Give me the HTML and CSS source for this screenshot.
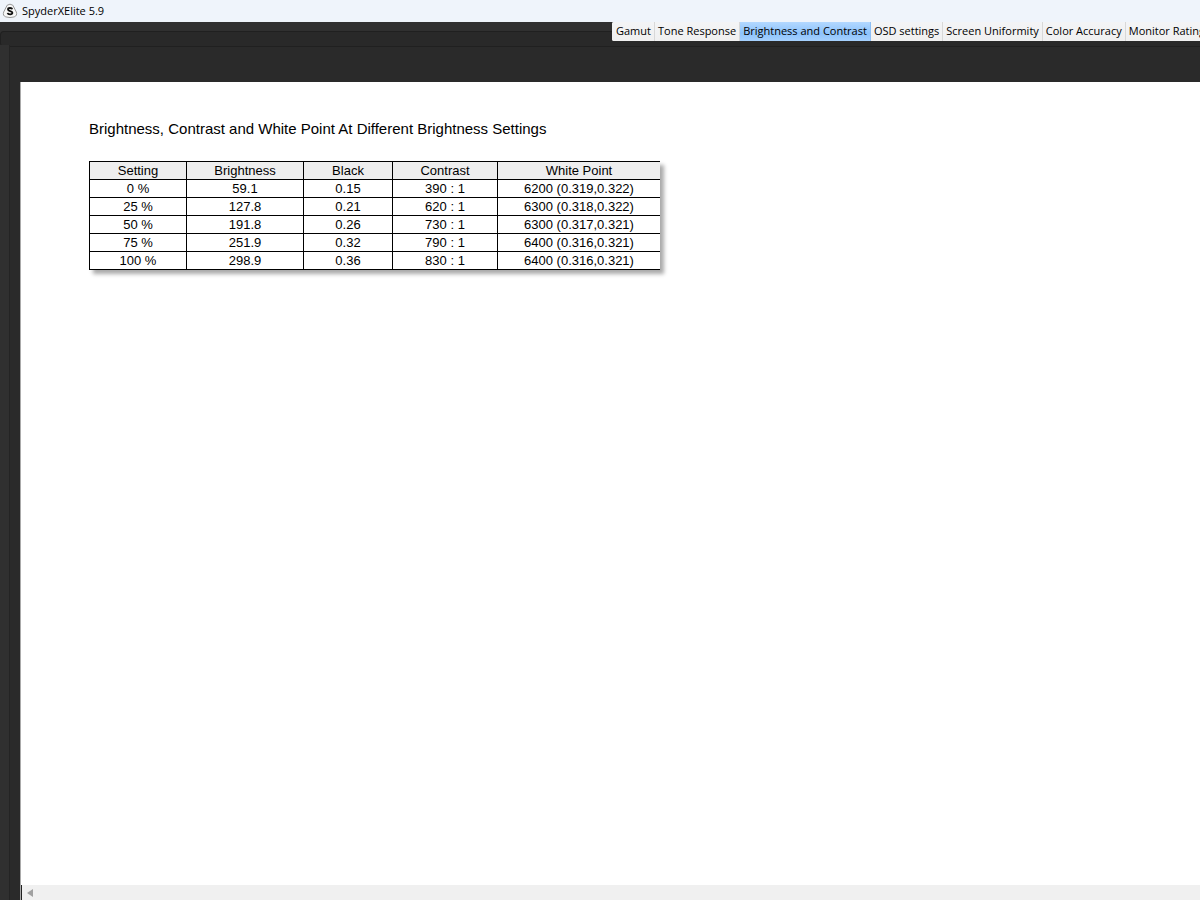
FILE: index.html
```html
<!DOCTYPE html>
<html lang="en">
<head>
  <meta charset="utf-8">
  <meta name="viewport" content="width=device-width, initial-scale=1.0">
  <title>SpyderXElite 5.9</title>
  <link rel="stylesheet" href="styles.css">
</head>
<body>

  <header class="titlebar">
    <svg class="logo" viewBox="0 0 16 16" aria-hidden="true">
      <path d="M5.2 2.2Q8 0.2 10.8 2.2L14.3 9Q15.6 12.6 12.2 13.9Q8 15.2 3.8 13.9Q0.4 12.6 1.7 9Z" fill="#f8f8f8" stroke="#999" stroke-width="1"/>
      <path d="M10.3 6.2C9.8 4.6 6 4.5 6 6.4C6 8.5 10.4 7.6 10.4 9.8C10.4 11.9 6 11.8 5.6 9.9" fill="none" stroke="#111" stroke-width="1.8"/>
    </svg>
    <span>SpyderXElite 5.9</span>
  </header>

  <!-- Report tabs -->
  <nav class="toolbar">
    <div class="tabs">
      <button class="tab">Gamut</button>
      <button class="tab">Tone Response</button>
      <button class="tab active">Brightness and Contrast</button>
      <button class="tab">OSD settings</button>
      <button class="tab">Screen Uniformity</button>
      <button class="tab">Color Accuracy</button>
      <button class="tab">Monitor Rating</button>
    </div>
  </nav>

  <div class="workspace">
    <div class="rail"></div>
    <main class="sheet">
      <div class="report">
        <h1>Brightness, Contrast and White Point At Different Brightness Settings</h1>
        <table class="results">
          <colgroup>
            <col class="col-setting">
            <col class="col-brightness">
            <col class="col-black">
            <col class="col-contrast">
            <col class="col-white">
          </colgroup>
          <thead>
            <tr><th>Setting</th><th>Brightness</th><th>Black</th><th>Contrast</th><th>White Point</th></tr>
          </thead>
          <tbody>
            <tr><td>0 %</td><td>59.1</td><td>0.15</td><td>390 : 1</td><td>6200 (0.319,0.322)</td></tr>
            <tr><td>25 %</td><td>127.8</td><td>0.21</td><td>620 : 1</td><td>6300 (0.318,0.322)</td></tr>
            <tr><td>50 %</td><td>191.8</td><td>0.26</td><td>730 : 1</td><td>6300 (0.317,0.321)</td></tr>
            <tr><td>75 %</td><td>251.9</td><td>0.32</td><td>790 : 1</td><td>6400 (0.316,0.321)</td></tr>
            <tr><td>100 %</td><td>298.9</td><td>0.36</td><td>830 : 1</td><td>6400 (0.316,0.321)</td></tr>
          </tbody>
        </table>
      </div>
      <div class="scrollbar">
        <button class="scroll-left" aria-label="Scroll left">
          <svg viewBox="0 0 6 8" aria-hidden="true"><path d="M6 0V8L0 4Z" fill="#a0a0a0"/></svg>
        </button>
      </div>
    </main>
  </div>

</body>
</html>
```
FILE: styles.css
```css
* {
  box-sizing: border-box;
}

body {
  display: flex;
  flex-direction: column;
  height: 100vh;
  margin: 0;
  overflow: hidden;
  background: #2a2a2a;
  color: #000;
  font-family: "Open Sans", "Noto Sans", sans-serif;
  font-size: 11px;
}

button {
  border: none;
  padding: 0;
  font: inherit;
  color: inherit;
}

.titlebar {
  display: flex;
  align-items: center;
  gap: 4px;
  flex: none;
  height: 22px;
  padding: 0 0 1px 2px;
  background: #eff4fb;
}

.logo {
  width: 16px;
  height: 16px;
}

.toolbar {
  display: grid;
  grid-template-columns: 51% 1fr;
  flex: none;
  height: 23px;
  background: #303030;
}

/* sunken strip behind the tabs */
.toolbar::before {
  content: "";
  grid-row: 1;
  grid-column: 1 / 3;
  height: 14px;
  margin-top: 9px;
  background: #292929;
  border: 1px solid #202020;
  border-right: none;
  border-radius: 4px 0 0 4px;
}

.tabs {
  grid-row: 1;
  grid-column: 2;
  display: flex;
  min-width: 0;
  height: 19px;
  background: #f0f0f0;
  border-radius: 2px 0 0 2px;
}

.tab {
  flex: none;
  padding: 0 3px 2px;
  line-height: 17px;
  white-space: nowrap;
  background: linear-gradient(#f3f4f6, #f0f0f0);
  border-right: 1px solid #d8d8d8;
}

.tab:first-child {
  padding-left: 4px;
  border-radius: 2px 0 0 2px;
}

.tab.active {
  background: linear-gradient(#b3d8ff, #8dc3fc 60%, #a6d0fd);
  border-right-color: #8dbff5;
}

.workspace {
  display: flex;
  flex: 1;
  min-height: 0;
}

.rail {
  flex: none;
  width: 10px;
  background: #303030;
  border-right: 1px solid #242424;
}

.sheet {
  display: flex;
  flex-direction: column;
  flex: 1;
  min-width: 0;
  margin: 37px 0 0 10px;
  background: #fff;
  border-left: 1px solid #aaa;
}

.report {
  flex: 1;
  padding: 38px 68px;
  font-family: "Liberation Sans", Arial, sans-serif;
}

h1 {
  margin: 0 0 23px;
  font-size: 15px;
  font-weight: normal;
  line-height: 18px;
}

.results {
  width: 571px;
  table-layout: fixed;
  border-collapse: collapse;
  border-right: none;
  box-shadow: 4px 4px 4px #aaa;
  background: #fff;
  font-size: 13px;
  line-height: 17px;
  text-align: center;
}

.results th,
.results td {
  padding: 0;
  font-weight: normal;
  border: 1px solid #000;
}

.results th {
  background: #eee;
}

.results th:last-child,
.results td:last-child {
  border-right: none;
}

.col-setting {
  width: 97px;
}

.col-brightness {
  width: 117px;
}

.col-black {
  width: 89px;
}

.col-contrast {
  width: 105px;
}

.scrollbar {
  display: flex;
  flex: none;
  height: 15px;
  background: #f0f0f0;
  border-left: 1px solid #222;
}

.scroll-left {
  display: flex;
  align-items: center;
  justify-content: center;
  width: 15px;
  background: none;
}

.scroll-left svg {
  width: 6px;
  height: 8px;
}
```
